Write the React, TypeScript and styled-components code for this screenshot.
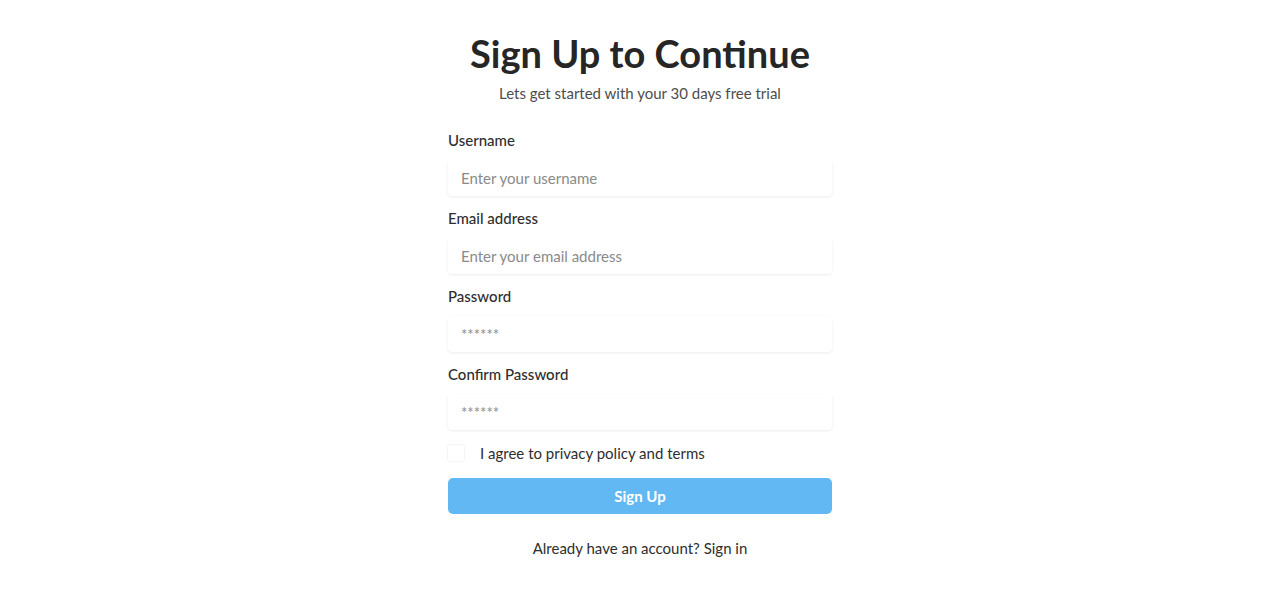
import styled, { createGlobalStyle } from 'styled-components';

const GlobalStyle = createGlobalStyle`
  html, body {
    margin: 0;
    padding: 0;
    background: #ffffff;
    font-family: Lato, 'Liberation Sans', sans-serif;
    color: #2b2b2b;
  }
  * {
    box-sizing: border-box;
  }
`;

const fields = [
  { label: 'Username', placeholder: 'Enter your username' },
  { label: 'Email address', placeholder: 'Enter your email address' },
  { label: 'Password', placeholder: '******' },
  { label: 'Confirm Password', placeholder: '******' },
];

const App = () => {
  return (
    <>
      <GlobalStyle />
      <Page>
        <Title>Sign Up to Continue</Title>
        <Subtitle>Lets get started with your 30 days free trial</Subtitle>
        <Form onSubmit={(e) => e.preventDefault()}>
          {fields.map((field) => (
            <Field key={field.label}>
              <Label>{field.label}</Label>
              <Input placeholder={field.placeholder} type="text" />
            </Field>
          ))}
          <AgreeRow>
            <Checkbox type="checkbox" />
            <span>I agree to privacy policy and terms</span>
          </AgreeRow>
          <SubmitButton type="submit">Sign Up</SubmitButton>
          <Footer>Already have an account? Sign in</Footer>
        </Form>
      </Page>
    </>
  );
};

export default App;

const Page = styled.div`
  display: flex;
  flex-direction: column;
  align-items: center;
  padding-top: 27px;
`;

const Title = styled.h1`
  margin: 0;
  font-size: 38px;
  font-weight: 700;
  line-height: 52px;
  color: #262626;
`;

const Subtitle = styled.p`
  margin: 3px 0 0;
  font-size: 15px;
  line-height: 22px;
  color: #4d4d4d;
`;

const Form = styled.form`
  width: 384px;
  margin-top: 25px;
  display: flex;
  flex-direction: column;
`;

const Field = styled.div`
  display: flex;
  flex-direction: column;
  gap: 9px;
  margin-bottom: 11px;
`;

const Label = styled.label`
  font-size: 15px;
  line-height: 22px;
  font-weight: 500;
  color: #2e2e2e;
`;

const Input = styled.input`
  height: 36px;
  width: 100%;
  border: none;
  border-radius: 4px;
  padding: 0 13px;
  font-family: inherit;
  font-size: 15px;
  color: #333;
  background: #fff;
  box-shadow: 0 1px 3px rgba(0, 0, 0, 0.08);
  outline: none;
  &::placeholder {
    color: #8a8a8a;
  }
`;

const AgreeRow = styled.label`
  display: flex;
  align-items: center;
  gap: 16px;
  margin-top: 1px;
  font-size: 15px;
  line-height: 22px;
  color: #2e2e2e;
`;

const Checkbox = styled.input`
  appearance: none;
  margin: 0;
  width: 16px;
  height: 16px;
  border-radius: 2px;
  background: #fff;
  box-shadow: 0 0 2px rgba(0, 0, 0, 0.15);
`;

const SubmitButton = styled.button`
  margin-top: 14px;
  height: 36px;
  width: 100%;
  border: none;
  border-radius: 5px;
  background: #62b8f3;
  color: #fff;
  font-family: inherit;
  font-size: 15px;
  font-weight: 700;
`;

const Footer = styled.p`
  margin: 23px 0 0;
  text-align: center;
  font-size: 15px;
  line-height: 22px;
  color: #2e2e2e;
`;
